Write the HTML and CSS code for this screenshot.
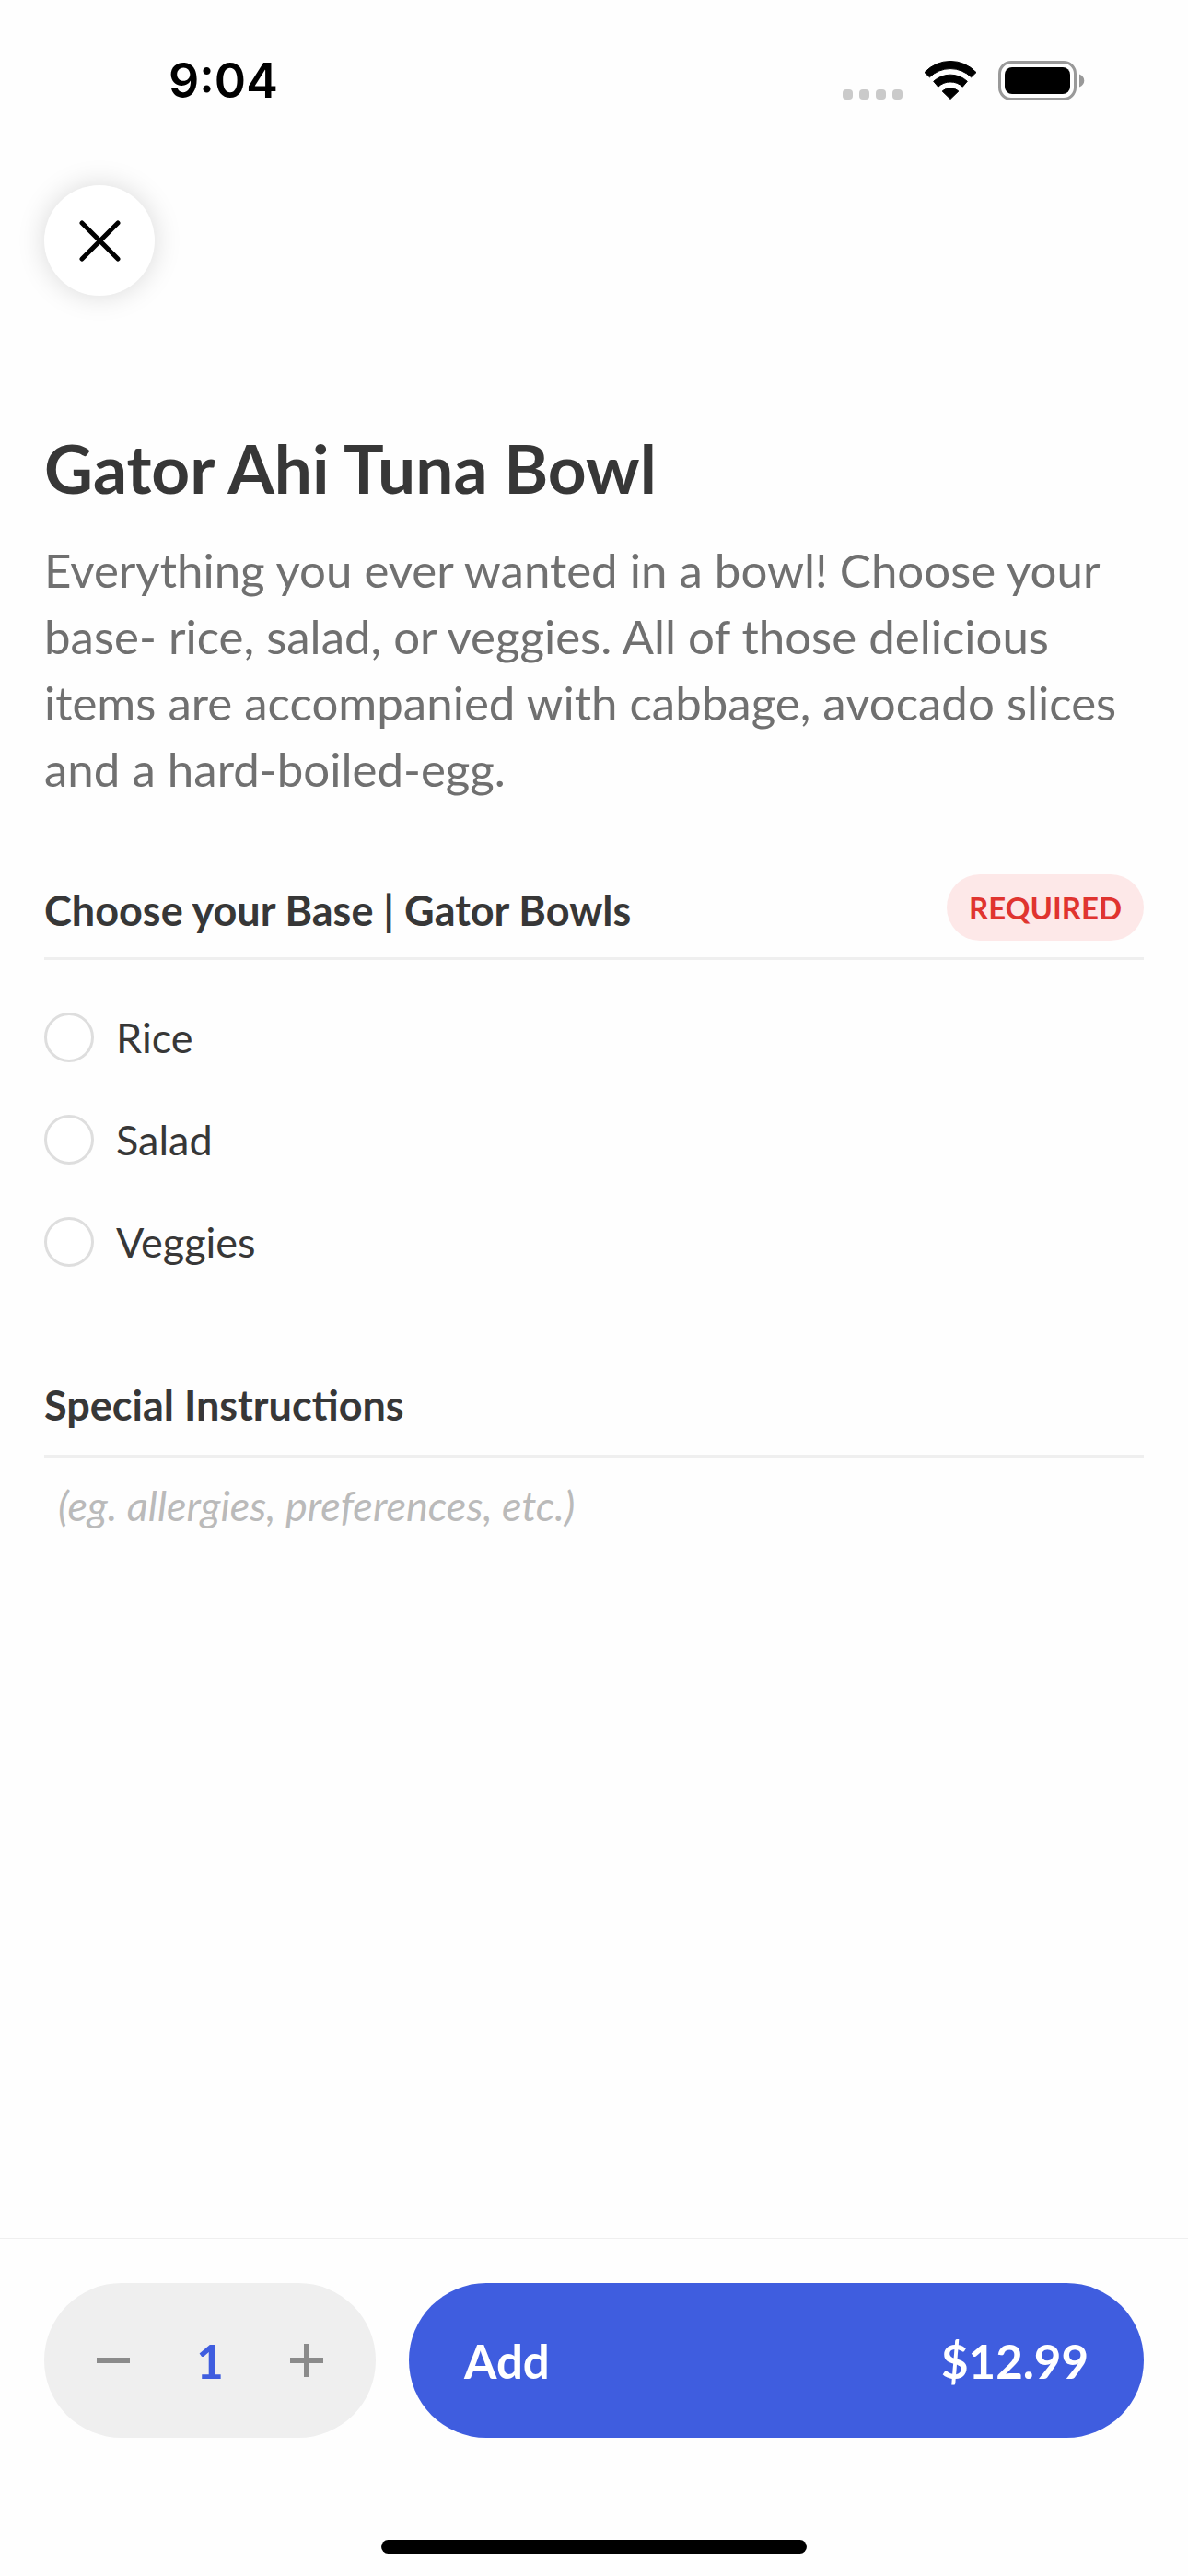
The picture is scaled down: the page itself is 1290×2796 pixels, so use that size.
FILE: index.html
```html
<!DOCTYPE html>
<html lang="en">
<head>
    <meta charset="UTF-8">
    <meta name="viewport" content="width=device-width, initial-scale=1.0">
    <title>Gator Ahi Tuna Bowl</title>
    <link rel="stylesheet" href="styles.css">
</head>
<body>
    <div class="status-bar">
        <span class="time">9:04</span>
        <div class="status-icons">
            <svg class="signal" width="65" height="43" viewBox="0 0 65 43" fill="#cacaca">
                <rect x="0" y="31" width="11" height="11" rx="4"/>
                <rect x="18" y="31" width="11" height="11" rx="4"/>
                <rect x="36" y="31" width="11" height="11" rx="4"/>
                <rect x="54" y="31" width="11" height="11" rx="4"/>
            </svg>
            <svg class="wifi" width="58" height="43" viewBox="0 0 58 43" fill="#000" stroke="#000" stroke-linejoin="round">
                <path d="M1 12.6A38.3 38.3 0 0 1 57 12.6L51.6 17.8A32.3 32.3 0 0 0 6.4 17.8Z"/>
                <path d="M10.7 22.3A27 27 0 0 1 47.3 22.3L42.3 28.2A19.5 19.5 0 0 0 15.7 28.2Z"/>
                <path d="M20.2 33A12.8 12.8 0 0 1 37.8 33L29 41.5Z"/>
            </svg>
            <svg class="battery" width="94" height="43" viewBox="0 0 94 43">
                <rect x="1.5" y="1.5" width="82" height="40" rx="12.5" fill="none" stroke="#999" stroke-width="3"/>
                <rect x="7" y="7" width="71" height="29" rx="8" fill="#000"/>
                <path d="M88 14.5C95 17 95 26 88 28.5Z" fill="#999"/>
            </svg>
        </div>
    </div>

    <main class="container">
        <button class="close-button" type="button" aria-label="Close">
            <svg width="46" height="46" viewBox="0 0 46 46" stroke="#000" stroke-width="5" stroke-linecap="round">
                <path d="M4 4L43 43M43 4L4 43"/>
            </svg>
        </button>

        <h1>Gator Ahi Tuna Bowl</h1>
        <p class="description">Everything you ever wanted in a bowl! Choose your base- rice, salad, or veggies. All of those delicious items are accompanied with cabbage, avocado slices and a hard-boiled-egg.</p>

        <section class="choices" role="radiogroup" aria-labelledby="baseHeading">
            <div class="section-heading with-badge">
                <h2 id="baseHeading">Choose your Base | Gator Bowls</h2>
                <span class="badge">REQUIRED</span>
            </div>
            <div class="options">
                <label class="option"><input type="radio" name="base" value="rice"> Rice</label>
                <label class="option"><input type="radio" name="base" value="salad"> Salad</label>
                <label class="option"><input type="radio" name="base" value="veggies"> Veggies</label>
            </div>
        </section>

        <section class="instructions">
            <div class="section-heading">
                <h2><label for="instructions">Special Instructions</label></h2>
            </div>
            <textarea id="instructions" rows="3" placeholder="(eg. allergies, preferences, etc.)"></textarea>
        </section>
    </main>

    <footer class="order-bar">
        <div class="order-controls">
            <div class="stepper">
                <button type="button" id="minusButton" aria-label="Remove one">
                    <svg width="36" height="36" viewBox="0 0 36 36" fill="#8b8b8b"><path d="M0 15H36V21H0Z"/></svg>
                </button>
                <output id="quantity">1</output>
                <button type="button" id="plusButton" aria-label="Add one">
                    <svg width="36" height="36" viewBox="0 0 36 36" fill="#8b8b8b"><path d="M15 0H21V15H36V21H21V36H15V21H0V15H15Z"/></svg>
                </button>
            </div>
            <button class="add-button" type="button">
                <span>Add</span>
                <span id="price">$12.99</span>
            </button>
        </div>
        <div class="home-indicator"></div>
    </footer>

    <script>
        const unitPrice = 12.99;
        const quantity = document.getElementById('quantity');
        const price = document.getElementById('price');

        // Change the quantity and update the total on the Add button
        function changeQuantity(amount) {
            const count = Math.max(1, Number(quantity.textContent) + amount);
            quantity.textContent = count;
            price.textContent = '$' + (count * unitPrice).toFixed(2);
        }

        document.getElementById('minusButton').addEventListener('click', () => changeQuantity(-1));
        document.getElementById('plusButton').addEventListener('click', () => changeQuantity(1));
    </script>
</body>
</html>
```
FILE: styles.css
```css
* {
    box-sizing: border-box;
}

body {
    display: flex;
    flex-direction: column;
    min-height: 100vh;
    margin: 0; /* Remove default margin */
    background-color: #fefefe;
    color: #373737;
    font-family: Lato, sans-serif;
    font-size: 45px;
}

button {
    border: none;
    padding: 0;
    font-family: inherit;
    cursor: pointer;
}

svg {
    display: block;
}

/* Status bar */
.status-bar {
    display: flex;
    align-items: center;
    justify-content: space-between;
    height: 174px;
    padding: 0 112px 0 183px;
}

.time {
    color: #000;
    font-family: Inter, sans-serif;
    font-size: 52px;
    font-weight: 600;
}

.status-icons {
    display: flex;
    gap: 23px;
}

/* Item details */
.container {
    padding: 27px 48px 48px;
}

.close-button {
    display: flex;
    align-items: center;
    justify-content: center;
    width: 120px;
    height: 120px;
    border-radius: 50%;
    background-color: #fff;
    box-shadow: 0 0 30px rgba(0, 0, 0, 0.15);
}

h1 {
    margin: 143px 0 31px;
    font-size: 73px;
    line-height: 88px;
}

.description {
    margin: 0;
    color: #707070;
    font-size: 51px;
    line-height: 72px;
}

.choices {
    margin-top: 78px;
}

.section-heading {
    display: flex;
    align-items: center;
    justify-content: space-between;
    min-height: 93px;
    padding-bottom: 18px;
    border-bottom: 3px solid #efefef;
}

.with-badge {
    align-items: flex-end;
}

h2 {
    margin: 0;
    font-size: 45px;
    line-height: 66px;
}

.badge {
    padding: 0 24px;
    border-radius: 36px;
    background-color: #fde8e8;
    color: #e0342f;
    font-size: 33px;
    font-weight: bold;
    line-height: 72px;
}

.options {
    display: flex;
    flex-direction: column;
    gap: 57px;
    padding: 57px 0;
}

.option {
    display: flex;
    align-items: center;
    gap: 24px;
    line-height: 54px;
    cursor: pointer;
}

.option input {
    appearance: none;
    width: 54px;
    height: 54px;
    margin: 0;
    border: 3px solid #dedede;
    border-radius: 50%;
    background-color: #fff;
}

.option input:checked {
    border: 15px solid #3f5ddf;
}

.instructions {
    margin-top: 57px;
}

textarea {
    display: block;
    width: 100%;
    padding: 25px 15px;
    border: none;
    outline: none;
    resize: none;
    background: transparent;
    color: #373737;
    font-family: inherit;
    font-size: 45px;
    line-height: 54px;
}

textarea::placeholder {
    color: #bababa;
    font-style: italic;
}

/* Bottom bar */
.order-bar {
    margin-top: auto;
    padding: 48px 48px 24px;
    border-top: 1px solid #efefef;
}

.order-controls {
    display: flex;
    gap: 36px;
}

.stepper {
    display: flex;
    align-items: center;
    justify-content: space-between;
    width: 360px;
    height: 168px;
    padding: 0 57px;
    border-radius: 84px;
    background-color: #efefef;
}

.stepper button {
    background: none;
}

.stepper output {
    color: #3f5ddf;
    font-size: 51px;
    font-weight: bold;
}

.add-button {
    display: flex;
    flex: 1;
    align-items: center;
    justify-content: space-between;
    padding: 0 60px;
    border-radius: 84px;
    background-color: #3f5ddf;
    color: #fff;
    font-size: 51px;
    font-weight: bold;
}

.home-indicator {
    width: 462px;
    height: 15px;
    margin: 111px auto 0;
    border-radius: 8px;
    background-color: #000;
}
```
